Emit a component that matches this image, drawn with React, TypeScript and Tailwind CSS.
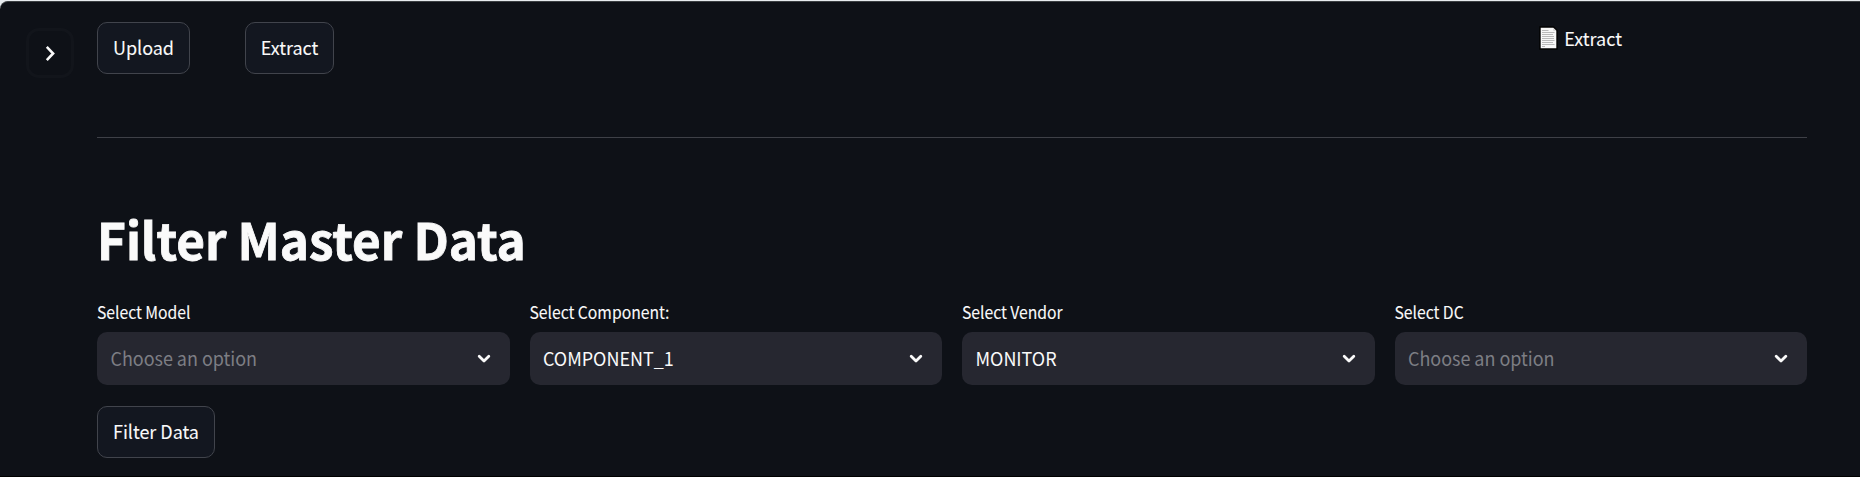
import React from "react";

const fieldLabels = [
  { label: "Select Model", value: "" },
  { label: "Select Component:", value: "COMPONENT_1" },
  { label: "Select Vendor", value: "MONITOR" },
  { label: "Select DC", value: "" },
];

function Button({ children, className }: { children: React.ReactNode; className: string }) {
  return (
    <button
      className={`flex h-[52px] items-center justify-center rounded-[10px] border border-[#41444c] bg-[#131720] pb-[1px] text-[18px] tracking-[-0.03px] whitespace-nowrap ${className}`}
    >
      <span className="inline-block origin-[0_70%] scale-y-[1.04] [-webkit-text-stroke:0.08px_#fafafa]">{children}</span>
    </button>
  );
}

function ChevronDown() {
  return (
    <svg width="14" height="10" viewBox="0 0 14 10" fill="none" stroke="#fafafa" strokeWidth="2.8" strokeLinecap="round" strokeLinejoin="round">
      <path d="M2.2 2.3 L7 7.1 L11.8 2.3" />
    </svg>
  );
}

function PageIcon() {
  return (
    <svg width="19" height="24" viewBox="0 0 19 24">
      <path d="M1 1 H14.5 L18 4.5 V23 H1 Z" fill="#f7f7f7" stroke="#000" strokeWidth="1.4" />
      <path d="M14.2 1.8 V4.8 H17.4" fill="#d5d5d5" />
      <path
        d="M3 4.5 H9.5 M3 6.5 H15.5 M3 8.5 H14 M3 10.5 H15 M3 12.5 H15 M3 14.5 H15.5 M3 16.5 H14 M3 18.5 H15.5 M3 20.5 H6"
        stroke="#b9b9b9"
        strokeWidth="1"
      />
    </svg>
  );
}

function SelectField({ label, value }: { label: string; value: string }) {
  return (
    <div className="flex flex-col">
      <label className="h-[32px] origin-[0_10px] scale-y-[1.08] text-[15.75px] leading-[24px] tracking-[-0.04px] [-webkit-text-stroke:0.08px_#fafafa]">
        {label}
      </label>
      <div className="flex h-[53px] items-center justify-between rounded-[10px] bg-[#262730] pr-[19px] pl-[13.5px] text-[18px] tracking-[-0.04px]">
        <span className={`inline-block origin-[0_70%] scale-y-[1.05] pb-[1px] ${value ? "text-[#fafafa]" : "text-[#7d7e84]"}`}>
          {value || "Choose an option"}
        </span>
        <ChevronDown />
      </div>
    </div>
  );
}

export default function App() {
  return (
    <div className="h-[477px] w-full overflow-hidden bg-[#e8ecef] pt-px font-['Noto_Sans_CJK_SC','Source_Sans_Pro',sans-serif] text-[#fafafa]">
      <div className="flex h-[476px] rounded-tl-[8px] border-t border-b border-t-[#3c4043] border-b-black bg-[#0e1117]">
        <aside className="w-[97px] shrink-0 pt-[26px] pl-[26px]">
          <button className="flex h-[50px] w-[48px] items-center justify-center rounded-[13px] border-[3px] border-[#12151b]">
            <svg width="10" height="17" viewBox="0 0 10 17" fill="none" stroke="#fafafa" strokeWidth="2.6" strokeLinecap="square">
              <path d="M2.7 2.8 L8.1 8.5 L2.7 14.2" />
            </svg>
          </button>
        </aside>
        <main className="mr-[53px] flex flex-1 flex-col">
          <header className="flex h-[134px] items-start pt-[20px]">
            <Button className="w-[93px]">Upload</Button>
            <Button className="ml-[55px] w-[89px]">Extract</Button>
            <div className="mt-[4px] mr-[185px] ml-auto flex items-start gap-[6px] text-[18px] leading-[24px]">
              <PageIcon />
              <span className="inline-block scale-y-[1.04] [-webkit-text-stroke:0.08px_#fafafa]">Extract</span>
            </div>
          </header>
          <hr className="mt-px h-px border-0 bg-[#3e4047]" />
          <h1 className="mt-[68px] h-[67px] origin-[0_54px] scale-y-[1.02] text-[49.5px] leading-[66px] font-bold tracking-[-0.07px] [-webkit-text-stroke:0.8px_#fafafa]">
            Filter Master Data
          </h1>
          <div className="mt-[27px] grid grid-cols-4 gap-[20px]">
            {fieldLabels.map((f) => (
              <SelectField key={f.label} label={f.label} value={f.value} />
            ))}
          </div>
          <Button className="mt-[21px] w-[118px]">Filter Data</Button>
        </main>
      </div>
    </div>
  );
}
